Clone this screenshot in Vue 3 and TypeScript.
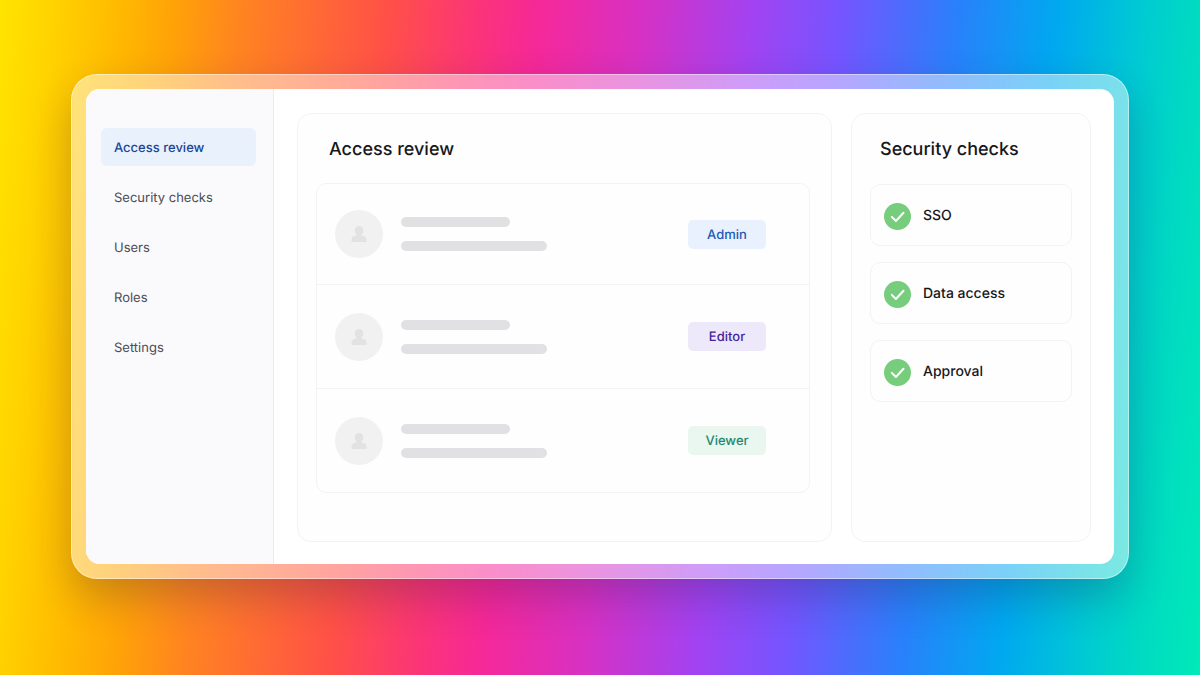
<script setup lang="ts">
import { ref } from 'vue'

interface Member {
  id: number
  role: string
  tone: 'blue' | 'violet' | 'green'
}

const sections: string[] = ['Access review', 'Security checks', 'Users', 'Roles', 'Settings']
const active = ref<string>('Access review')

const members: Member[] = [
  { id: 1, role: 'Admin', tone: 'blue' },
  { id: 2, role: 'Editor', tone: 'violet' },
  { id: 3, role: 'Viewer', tone: 'green' },
]

const checks: string[] = ['SSO', 'Data access', 'Approval']
</script>

<template>
  <div class="page">
    <div class="frame">
      <div class="window">
        <nav class="sidebar">
          <a
            v-for="section in sections"
            :key="section"
            href="#"
            class="nav-link"
            :class="{ active: section === active }"
            @click.prevent="active = section"
          >{{ section }}</a>
        </nav>

        <main class="content">
          <section class="card review">
            <h1 class="title">Access review</h1>
            <ul class="members">
              <li v-for="member in members" :key="member.id" class="member">
                <span class="avatar">
                  <svg viewBox="0 0 16 16" width="16" height="16" aria-hidden="true">
                    <path d="M8 0C5.300 0 3.700 1.900 3.700 4.400c0 1.800.8 3.300 2 4.100v.7L2.900 10.200C1.300 10.800.5 12.200.5 14v2h15v-2c0-1.800-.8-3.200-2.400-3.800l-2.800-1v-.7c1.200-.8 2-2.300 2-4.100C12.300 1.900 10.700 0 8 0z" />
                  </svg>
                </span>
                <span class="lines">
                  <span class="line short"></span>
                  <span class="line"></span>
                </span>
                <span class="badge" :class="member.tone">{{ member.role }}</span>
              </li>
            </ul>
          </section>

          <section class="card security">
            <h2 class="title">Security checks</h2>
            <ul class="checks">
              <li v-for="check in checks" :key="check" class="check">
                <svg class="tick" viewBox="0 0 27 27" aria-hidden="true">
                  <circle cx="13.500" cy="13.500" r="13.500" />
                  <path d="M7.800 13.900l4.100 4.100 7.600-8.200" />
                </svg>
                <span>{{ check }}</span>
              </li>
            </ul>
          </section>
        </main>
      </div>
    </div>
  </div>
</template>

<style>
body {
  margin: 0;
}
</style>

<style scoped>
.page {
  box-sizing: border-box;
  min-height: 100vh;
  padding: 74px 71px 96px;
  display: flex;
  font-family: Inter, "Liberation Sans", sans-serif;
  font-size: 14px;
  line-height: 20px;
  text-rendering: geometricPrecision;
  background: linear-gradient(
    95deg,
    #ffe400 0%,
    #ffd400 4%,
    #ffbc00 9%,
    #ffa208 14%,
    #ff8520 19%,
    #ff5048 31%,
    #fb3478 38%,
    #f52899 43%,
    #d731c4 51%,
    #a143f2 60%,
    #7455ff 67%,
    #2a80fb 76%,
    #00a8f0 84%,
    #00cbd2 91%,
    #00dac2 95%,
    #00eab8 100%
  );
}

.frame {
  box-sizing: border-box;
  flex: 1;
  min-width: 0;
  display: flex;
  padding: 14px;
  border: 1px solid rgba(255, 255, 255, 0.45);
  border-radius: 26px;
  background: rgba(255, 255, 255, 0.48);
  box-shadow: 0 18px 40px rgba(30, 20, 60, 0.24);
}

.window {
  flex: 1;
  min-width: 0;
  display: flex;
  overflow: hidden;
  border-radius: 14px;
  background: #ffffff;
}

.sidebar {
  box-sizing: border-box;
  flex: 0 0 188px;
  display: flex;
  flex-direction: column;
  gap: 12px;
  padding: 39px 17px 24px 15px;
  border-right: 1px solid #ececef;
  background: #fafafc;
}

.nav-link {
  padding: 10px 13px 8px;
  border-radius: 6px;
  font-size: 13px;
  color: #4d4d52;
  text-decoration: none;
}

.nav-link.active {
  background: #e9f1fd;
  color: #1c4696;
  font-weight: 500;
}

.content {
  flex: 1;
  min-width: 0;
  display: grid;
  grid-template-columns: minmax(0, 1fr) 240px;
  gap: 19px;
  padding: 24px 23px 22px;
}

.card {
  border: 1px solid #f3f3f4;
  border-radius: 14px;
  background: #fefefe;
  padding: 24px 18px;
}

.review {
  padding-right: 21px;
}

.title {
  margin: 0 0 21px;
  padding-left: 13px;
  font-size: 18px;
  line-height: 24px;
  font-weight: 500;
  color: #17171a;
}

.security .title {
  margin-bottom: 22px;
  padding-left: 10px;
}

.members,
.checks {
  list-style: none;
  margin: 0;
  padding: 0;
}

.members {
  border: 1px solid #f3f3f4;
  border-radius: 10px;
}

.member {
  box-sizing: border-box;
  height: 104px;
  display: flex;
  align-items: center;
  gap: 18px;
  padding: 0 43px 0 18px;
}

.member:first-child {
  height: 100px;
}

.member + .member {
  border-top: 1px solid #f3f3f4;
}

.avatar {
  flex: none;
  width: 48px;
  height: 48px;
  display: grid;
  place-items: center;
  border-radius: 50%;
  background: #f1f1f1;
}

.avatar path {
  fill: #e2e2e3;
}

.lines {
  flex: 1;
  display: grid;
  gap: 14px;
}

.line {
  width: 146px;
  height: 10px;
  border-radius: 5px;
  background: #e1e1e4;
}

.line.short {
  width: 109px;
}

.badge {
  box-sizing: border-box;
  width: 78px;
  padding: 5px 0 4px;
  border-radius: 5px;
  text-align: center;
  font-size: 13px;
  font-weight: 500;
}

.blue {
  background: #e8f1fd;
  color: #2359b5;
}

.violet {
  background: #eee9fa;
  color: #43249c;
}

.green {
  background: #e9f7f0;
  color: #1f8a72;
}

.checks {
  display: grid;
  gap: 16px;
}

.check {
  box-sizing: border-box;
  height: 62px;
  display: flex;
  align-items: center;
  gap: 12px;
  padding: 2px 13px 0;
  border: 1px solid #f3f3f4;
  border-radius: 10px;
  font-weight: 500;
  color: #17171a;
}

.tick {
  flex: none;
  width: 27px;
  height: 27px;
}

.tick circle {
  fill: #76cd7b;
}

.tick path {
  fill: none;
  stroke: #ffffff;
  stroke-width: 2;
  stroke-linecap: round;
  stroke-linejoin: round;
}
</style>
